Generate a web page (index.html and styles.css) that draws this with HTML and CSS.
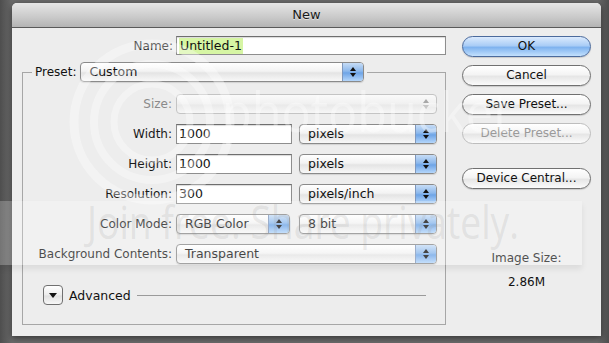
FILE: index.html
```html
<!DOCTYPE html>
<html>
<head>
<meta charset="utf-8">
<title>New</title>
<link rel="stylesheet" href="styles.css">
</head>
<body>
<div class="dialog">
  <div class="titlebar">New</div>
  <div class="content">
    <div class="left">
      <div class="name-row">
        <label class="name-label">Name:</label>
        <div class="field name-field"><span class="sel">Untitled-1</span></div>
      </div>
      <fieldset class="group">
        <legend class="legend">
          <span class="lbl">Preset:</span>
          <div class="popup preset"><span class="val">Custom</span><span class="arrows"></span></div>
        </legend>
        <div class="rows">
          <div class="row">
            <span class="rlabel dim">Size:</span>
            <div class="popup disabled full"><span class="val"></span><span class="arrows"></span></div>
          </div>
          <div class="row">
            <span class="rlabel">Width:</span>
            <div class="field num">1000</div>
            <div class="popup unit"><span class="val">pixels</span><span class="arrows"></span></div>
          </div>
          <div class="row">
            <span class="rlabel">Height:</span>
            <div class="field num">1000</div>
            <div class="popup unit"><span class="val">pixels</span><span class="arrows"></span></div>
          </div>
          <div class="row">
            <span class="rlabel">Resolution:</span>
            <div class="field num">300</div>
            <div class="popup unit"><span class="val">pixels/inch</span><span class="arrows"></span></div>
          </div>
          <div class="row">
            <span class="rlabel">Color Mode:</span>
            <div class="popup mode"><span class="val">RGB Color</span><span class="arrows"></span></div>
            <div class="popup unit bits"><span class="val">8 bit</span><span class="arrows"></span></div>
          </div>
          <div class="row">
            <span class="rlabel">Background Contents:</span>
            <div class="popup full"><span class="val">Transparent</span><span class="arrows"></span></div>
          </div>
        </div>
        <div class="advanced">
          <span class="disclose"><svg width="10" height="7" viewBox="0 0 10 7"><path d="M1 1 L9 1 L5 6 Z" fill="#111"/></svg></span>
          <span class="adv-text">Advanced</span>
          <span class="adv-line"></span>
        </div>
      </fieldset>
    </div>
    <div class="right">
      <div class="btn default">OK</div>
      <div class="btn">Cancel</div>
      <div class="btn">Save Preset...</div>
      <div class="btn disabled-btn">Delete Preset...</div>
      <div class="btn device">Device Central...</div>
      <div class="size-info">
        <div class="size-label">Image Size:</div>
        <div class="size-value">2.86M</div>
      </div>
    </div>
  </div>
</div>

<div class="wm-band"></div>
<svg class="wm-logo" width="180" height="180" viewBox="0 0 180 180">
  <g fill="none" stroke="#ffffff" stroke-opacity="0.35">
    <circle cx="90" cy="90" r="78" stroke-width="9"/>
    <circle cx="90" cy="90" r="58" stroke-width="8"/>
    <circle cx="90" cy="90" r="38" stroke-width="7"/>
  </g>
</svg>
<div class="wm-text1">photobucket</div>
<div class="wm-text2">Join free. Share privately.</div>
</body>
</html>
```
FILE: styles.css
```css
html, body {
  margin: 0;
  padding: 0;
}
body {
  width: 609px;
  height: 343px;
  overflow: hidden;
  position: relative;
  background: linear-gradient(to right, #4e4e4e 0px, #6a6a6a 12px, #6a6a6a 597px, #4e4e4e 609px);
  font-family: "DejaVu Sans", "Liberation Sans", sans-serif;
  font-size: 12px;
  color: #111;
}
.dialog {
  margin: 3px 0 0 12px;
  width: 589px;
  height: 333px;
  background: #ededed;
  border-radius: 5px 5px 0 0;
  box-shadow: 0 2px 6px rgba(0,0,0,0.5);
  overflow: hidden;
}
.titlebar {
  height: 24px;
  line-height: 24px;
  text-align: center;
  font-size: 13px;
  color: #1a1a1a;
  background: linear-gradient(#e6e6e6, #c9c9c9 60%, #b4b4b4);
  border-bottom: 1px solid #5a5a5a;
  text-shadow: 0 1px 0 rgba(255,255,255,0.5);
}
.content {
  display: flex;
  padding-top: 8px;
}
.left {
  width: 434px;
}
.name-row {
  display: flex;
  align-items: center;
  height: 19px;
}
.name-label {
  width: 161px;
  text-align: right;
  padding-right: 3px;
}
.field {
  background: #fff;
  border: 1px solid #8e8e8e;
  border-top-color: #6e6e6e;
  box-shadow: inset 0 1px 1px rgba(0,0,0,0.15);
  box-sizing: border-box;
  height: 20px;
  line-height: 18px;
  padding-left: 2px;
  font-size: 12.5px;
}
.name-field {
  width: 270px;
  height: 19px;
  line-height: 17px;
}
.sel {
  background: #d6f5a4;
  padding: 0 1px;
  display: inline-block;
  height: 16px;
  line-height: 16px;
}
.group {
  margin: 7px 0 0 10px;
  padding: 0 0 19px 0;
  width: 424px;
  box-sizing: border-box;
  border: 1px solid #a6a6a6;
  min-width: 0;
}
.legend {
  display: flex;
  align-items: center;
  margin-left: 9px;
  padding: 0 3px;
  height: 20px;
}
.lbl {
  margin-right: 4px;
}
.popup {
  display: flex;
  align-items: stretch;
  box-sizing: border-box;
  height: 20px;
  border: 1px solid #8a8a8a;
  border-radius: 4px;
  background: linear-gradient(#ffffff, #f3f3f3 45%, #e4e4e4 55%, #f8f8f8);
  box-shadow: 0 1px 1px rgba(0,0,0,0.12);
  overflow: hidden;
}
.popup .val {
  flex: 1;
  padding-left: 8px;
  line-height: 18px;
  white-space: nowrap;
  font-size: 12.5px;
}
.popup .arrows {
  width: 20px;
  position: relative;
  background: linear-gradient(#c6dcf6, #8cb8ec 45%, #6ea4e6 55%, #b4d6fb);
  border-left: 1px solid #7f98bd;
}
.popup .arrows::before,
.popup .arrows::after {
  content: "";
  position: absolute;
  left: 7px;
  width: 0;
  height: 0;
  border-left: 3px solid transparent;
  border-right: 3px solid transparent;
}
.popup .arrows::before {
  top: 4px;
  border-bottom: 4px solid #111;
}
.popup .arrows::after {
  top: 10px;
  border-top: 4px solid #111;
}
.preset {
  width: 284px;
}
.popup.disabled {
  border-color: #c4c4c4;
  background: linear-gradient(#fafafa, #f0f0f0 50%, #e9e9e9 55%, #f6f6f6);
  box-shadow: none;
}
.popup.disabled .arrows {
  background: transparent;
  border-left: none;
}
.popup.disabled .arrows::before { border-bottom-color: #a8a8a8; }
.popup.disabled .arrows::after { border-top-color: #a8a8a8; }
.rows {
  display: flex;
  flex-direction: column;
  gap: 10px;
  margin-top: 12px;
}
.row {
  display: flex;
  align-items: center;
  height: 20px;
}
.rlabel {
  width: 149px;
  padding-right: 4px;
  text-align: right;
  white-space: nowrap;
  color: #1a1a1a;
}
.rlabel.dim {
  color: #8a8a8a;
}
.full {
  width: 261px;
}
.num {
  width: 116px;
  margin-right: 7px;
}
.unit {
  width: 138px;
}
.mode {
  width: 114px;
  margin-right: 9px;
}
.advanced {
  display: flex;
  align-items: center;
  margin: 21px 19px 0 20px;
  height: 20px;
}
.disclose {
  width: 20px;
  height: 20px;
  box-sizing: border-box;
  border: 1px solid #707070;
  border-radius: 4px;
  background: linear-gradient(#ffffff, #ececec 50%, #e0e0e0 55%, #f8f8f8);
  display: flex;
  align-items: center;
  justify-content: center;
}
.adv-text {
  margin: 0 6px;
  font-size: 12.5px;
}
.adv-line {
  flex: 1;
  height: 1px;
  background: #9a9a9a;
}
.right {
  margin-left: 16px;
  width: 129px;
  display: flex;
  flex-direction: column;
  gap: 8px;
}
.btn {
  box-sizing: border-box;
  height: 21px;
  line-height: 19px;
  text-align: center;
  border: 1px solid #707070;
  border-radius: 11px;
  background: linear-gradient(#ffffff, #f4f4f4 45%, #e6e6e6 55%, #fbfbfb);
  box-shadow: 0 1px 1px rgba(0,0,0,0.15);
  color: #111;
}
.btn.default {
  border-color: #4b6a9c;
  background: linear-gradient(#dbeafd, #aacdf6 45%, #7fb3ef 55%, #c3e0fd);
}
.btn.disabled-btn {
  color: #9a9a9a;
  border-color: #bdbdbd;
  box-shadow: none;
}
.btn.device {
  margin-top: 16px;
}
.size-info {
  margin-top: 54px;
  text-align: center;
}
.size-label {
  color: #222;
}
.size-value {
  margin-top: 10px;
  color: #111;
}

/* photobucket watermark overlay */
.wm-band {
  position: absolute;
  left: 0;
  top: 201px;
  width: 582px;
  height: 64px;
  background: rgba(255,255,255,0.22);
  box-shadow: 0 4px 6px rgba(0,0,0,0.08);
  pointer-events: none;
}
.wm-logo {
  position: absolute;
  left: 62px;
  top: 32px;
  pointer-events: none;
}
.wm-text1 {
  position: absolute;
  left: 222px;
  top: 74px;
  font-family: "Open Sans", "DejaVu Sans", sans-serif;
  font-size: 54px;
  color: rgba(255,255,255,0.35);
  transform: scaleX(0.9);
  transform-origin: left top;
  pointer-events: none;
}
.wm-text2 {
  position: absolute;
  left: 87px;
  top: 190px;
  font-family: "Open Sans", "DejaVu Sans", sans-serif;
  font-size: 46px;
  color: rgba(150,150,150,0.18);
  transform: scaleX(0.81);
  transform-origin: left top;
  pointer-events: none;
  white-space: nowrap;
}
```
